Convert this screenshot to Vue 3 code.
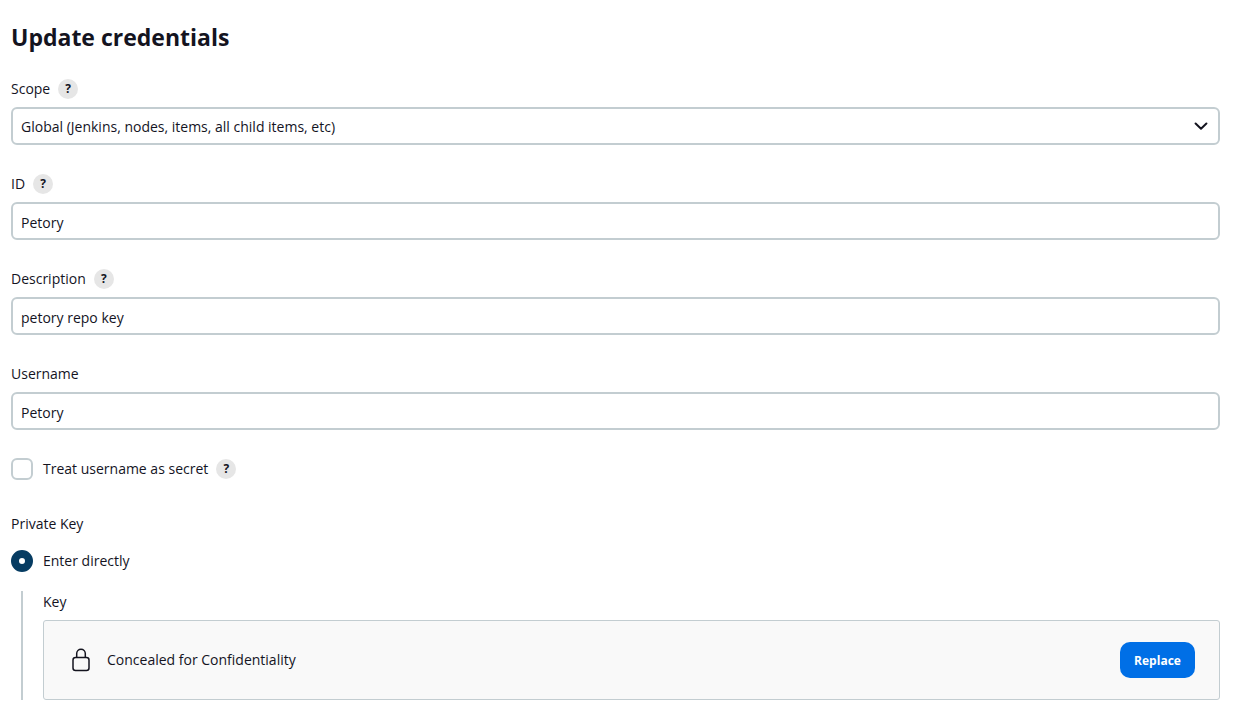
<script setup>
import { reactive } from 'vue'

const form = reactive({
  scope: 'global',
  id: 'Petory',
  description: 'petory repo key',
  username: 'Petory',
  secret: false,
  keySource: 'direct',
})

const textFields = [
  { key: 'id', label: 'ID', help: true },
  { key: 'description', label: 'Description', help: true },
  { key: 'username', label: 'Username', help: false },
]
</script>

<template>
  <main class="page">
    <h1>Update credentials</h1>
    <form @submit.prevent>
      <div class="field">
        <div class="label-row">
          <label for="scope">Scope</label>
          <button type="button" class="help" aria-label="Help for Scope">?</button>
        </div>
        <div class="select-wrap">
          <select id="scope" v-model="form.scope" class="control">
            <option value="global">Global (Jenkins, nodes, items, all child items, etc)</option>
          </select>
          <svg class="chevron" viewBox="0 0 14 8" aria-hidden="true">
            <path d="M1.600 1.500 7 6.700l5.400-5.200" />
          </svg>
        </div>
      </div>

      <div v-for="field in textFields" :key="field.key" class="field">
        <div class="label-row">
          <label :for="field.key">{{ field.label }}</label>
          <button v-if="field.help" type="button" class="help" :aria-label="`Help for ${field.label}`">?</button>
        </div>
        <input :id="field.key" v-model="form[field.key]" type="text" class="control" />
      </div>

      <div class="choice">
        <input id="secret" v-model="form.secret" type="checkbox" class="checkbox" />
        <label for="secret">Treat username as secret</label>
        <button type="button" class="help" aria-label="Help for Treat username as secret">?</button>
      </div>

      <fieldset>
        <legend>Private Key</legend>
        <div class="choice">
          <input id="direct" v-model="form.keySource" type="radio" name="keySource" value="direct" class="radio" />
          <label for="direct">Enter directly</label>
        </div>
        <div class="nested">
          <div class="key-label">Key</div>
          <div class="concealed">
            <svg class="lock" viewBox="0 0 20 24" aria-hidden="true">
              <rect x="2" y="9.500" width="16" height="13" rx="2.500" />
              <path d="M5.700 9.500V5.500a4.300 4.300 0 0 1 8.600 0v4" />
            </svg>
            <span>Concealed for Confidentiality</span>
            <button type="button" class="replace">Replace</button>
          </div>
        </div>
      </fieldset>
    </form>
  </main>
</template>

<style>
body {
  background: #fff;
}
</style>

<style scoped>
.page {
  box-sizing: border-box;
  padding: 19px 37px 20px 11px;
  color: #14141f;
  font-family: "Open Sans", "Noto Sans", sans-serif;
  font-size: 14px;
  line-height: 20px;
}

h1 {
  margin: 0 0 24px;
  font-size: 23px;
  font-weight: 700;
  line-height: 36px;
}

.field {
  margin-bottom: 29px;
}

.field:has(+ .choice) {
  margin-bottom: 28px;
}

.label-row {
  display: flex;
  align-items: center;
  gap: 8px;
  min-height: 20px;
  margin-bottom: 8px;
}

.help {
  display: flex;
  align-items: center;
  justify-content: center;
  width: 20px;
  height: 20px;
  padding: 0;
  border: 0;
  border-radius: 50%;
  background: #e6e6e6;
  color: #14141f;
  font-family: inherit;
  font-size: 12px;
  font-weight: 700;
  line-height: 20px;
}

.control {
  display: block;
  box-sizing: border-box;
  width: 100%;
  height: 38px;
  margin: 0;
  padding: 2px 8px 0;
  border: 2px solid #c3cdd1;
  border-radius: 6px;
  background: #fff;
  color: inherit;
  font: inherit;
  appearance: none;
}

.select-wrap {
  display: grid;
  align-items: center;
}

.select-wrap > * {
  grid-area: 1 / 1;
}

.chevron {
  justify-self: end;
  width: 14px;
  height: 8px;
  margin-right: 12px;
  fill: none;
  stroke: #14141f;
  stroke-width: 2;
  stroke-linecap: round;
  stroke-linejoin: round;
  pointer-events: none;
}

.choice {
  display: flex;
  align-items: center;
  min-height: 22px;
}

.choice label {
  margin-left: 10px;
}

.choice .help {
  margin-left: 8px;
}

.checkbox,
.radio {
  box-sizing: border-box;
  width: 22px;
  height: 22px;
  margin: 0;
  appearance: none;
}

.checkbox {
  border: 2px solid #c3cdd1;
  border-radius: 6px;
  background: #fff;
}

.radio {
  border: 2px solid #c3cdd1;
  border-radius: 50%;
}

.radio:checked {
  border: 8px solid #063c62;
  background: #fff;
}

fieldset {
  min-width: 0;
  margin: 34px 0 0;
  padding: 0;
  border: 0;
}

legend {
  margin-bottom: 16px;
  padding: 0;
}

.nested {
  margin: 19px 0 0 10px;
  padding-left: 20px;
  border-left: 2px solid #c3cdd1;
}

.key-label {
  padding: 1px 0 8px;
}

.concealed {
  display: flex;
  align-items: center;
  box-sizing: border-box;
  min-height: 80px;
  padding: 0 24px 0 27px;
  border: 1px solid #c3cdd1;
  border-radius: 3px;
  background: #f9f9f9;
}

.lock {
  width: 20px;
  height: 24px;
  margin-right: 16px;
  fill: none;
  stroke: #14141f;
  stroke-width: 1.5;
  stroke-linejoin: round;
}

.replace {
  min-width: 75px;
  height: 36px;
  margin-left: auto;
  padding: 0 12px;
  border: 0;
  border-radius: 10px;
  background: #006fe6;
  color: #fff;
  font-family: inherit;
  font-size: 12px;
  font-weight: 700;
}
</style>
